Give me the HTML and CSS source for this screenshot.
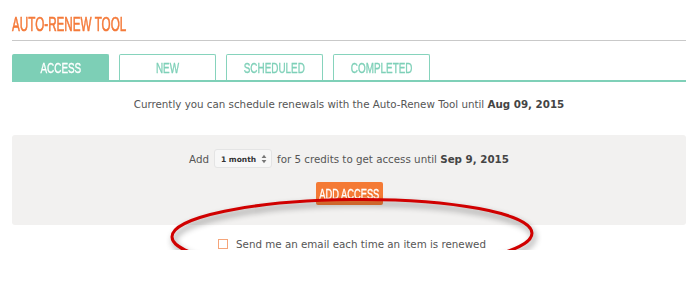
FILE: index.html
```html
<!DOCTYPE html>
<html>
<head>
<meta charset="utf-8">
<link rel="stylesheet" href="styles.css">
</head>
<body>
<div class="page">
  <h1 class="title"><span class="narrow">AUTO-RENEW TOOL</span></h1>
  <nav class="tabs">
    <a class="tab active"><span class="narrow">ACCESS</span></a>
    <a class="tab"><span class="narrow">NEW</span></a>
    <a class="tab"><span class="narrow">SCHEDULED</span></a>
    <a class="tab"><span class="narrow">COMPLETED</span></a>
  </nav>
  <p class="until">Currently you can schedule renewals with the Auto-Renew Tool until <b>Aug 09, 2015</b></p>
  <div class="panel">
    <div class="add-row">
      <span>Add</span>
      <span class="select">1 month
        <svg class="arrows" width="6" height="10" viewBox="0 0 6 10"><path d="M3 0.8 L5.4 3.9 H0.6 Z M3 9.2 L5.4 6.1 H0.6 Z" fill="#777"/></svg>
      </span>
      <span>for 5 credits to get access until <b>Sep 9, 2015</b></span>
    </div>
    <button class="btn"><span class="narrow">ADD ACCESS</span></button>
  </div>
  <label class="email"><span class="cb"></span>Send me an email each time an item is renewed</label>
  <svg class="annot" width="400" height="100" viewBox="0 0 400 100">
    <ellipse cx="187" cy="42" rx="180" ry="35.5" transform="rotate(-0.6 187 42)" fill="none" stroke="#d00000" stroke-width="3"/>
  </svg>
</div>
</body>
</html>
```
FILE: styles.css
```css
html, body { margin: 0; padding: 0; background: #fff; }
.page {
  position: relative;
  width: 674px;
  padding: 0 14px 0 12px;
  font-family: "DejaVu Sans", Verdana, sans-serif;
  color: #555;
}
.narrow {
  display: inline-block;
  font-family: "Liberation Sans", Arial, sans-serif;
  white-space: nowrap;
  transform: scaleX(0.68);
  -webkit-text-stroke: 0.35px currentColor;
}
.title {
  margin: 0;
  padding-top: 13px;
  height: 27px;
  border-bottom: 1.5px solid #c9c9c9;
  font-weight: normal;
  font-size: 20.5px;
  line-height: 22px;
  color: #f47a3a;
}
.title .narrow { transform-origin: left center; transform: scaleX(0.57); -webkit-text-stroke: 0.6px currentColor; }
.tabs {
  display: flex;
  gap: 10px;
  margin-top: 13px;
  border-bottom: 2px solid #7fd0b8;
}
.tab {
  box-sizing: border-box;
  width: 97px;
  height: 26px;
  border: 1.5px solid #86d3bc;
  border-bottom: none;
  border-radius: 2px 2px 0 0;
  display: flex;
  align-items: center;
  justify-content: center;
  font-size: 15px;
  color: #7fd0b8;
  padding-bottom: 1px;
}
.tab .narrow { transform: scaleX(0.66); }
.tab.active { background: #7dcfb6; color: #fff; border-color: #7dcfb6; }
.until {
  margin: 15px 0 0;
  text-align: center;
  font-size: 10.3px;
  line-height: 15px;
}
.until b, .add-row b { color: #444; }
.panel {
  margin-top: 23px;
  height: 90px;
  background: #f2f1f0;
  border-radius: 3px;
  display: flex;
  flex-direction: column;
  align-items: center;
}
.add-row {
  margin-top: 14px;
  display: flex;
  align-items: center;
  gap: 5px;
  font-size: 10.3px;
}
.select {
  box-sizing: border-box;
  width: 58px;
  height: 19px;
  background: #f7f7f7;
  border: 1px solid #e4e4e4;
  border-radius: 3px;
  font-size: 7.5px;
  font-weight: bold;
  color: #333;
  display: flex;
  align-items: center;
  justify-content: space-between;
  padding: 1px 4px 0 6px;
}
.btn {
  margin-top: 14px;
  width: 67px;
  height: 23px;
  border: none;
  border-radius: 2px;
  background: #f47a35;
  color: #fff;
  font-size: 15px;
  padding: 0;
  display: flex;
  align-items: center;
  justify-content: center;
}
.btn .narrow { transform: scaleX(0.62); }
.email {
  margin-top: 13px;
  display: flex;
  align-items: center;
  justify-content: center;
  gap: 8px;
  font-size: 10.3px;
  padding-left: 6px;
}
.cb {
  box-sizing: border-box;
  width: 10px;
  height: 10px;
  border: 1px solid #f5a57a;
  background: #fff;
}
.annot {
  position: absolute;
  left: 165px;
  top: 193px;
  overflow: visible;
  filter: drop-shadow(2px 4px 3px rgba(0,0,0,0.45));
}
```
